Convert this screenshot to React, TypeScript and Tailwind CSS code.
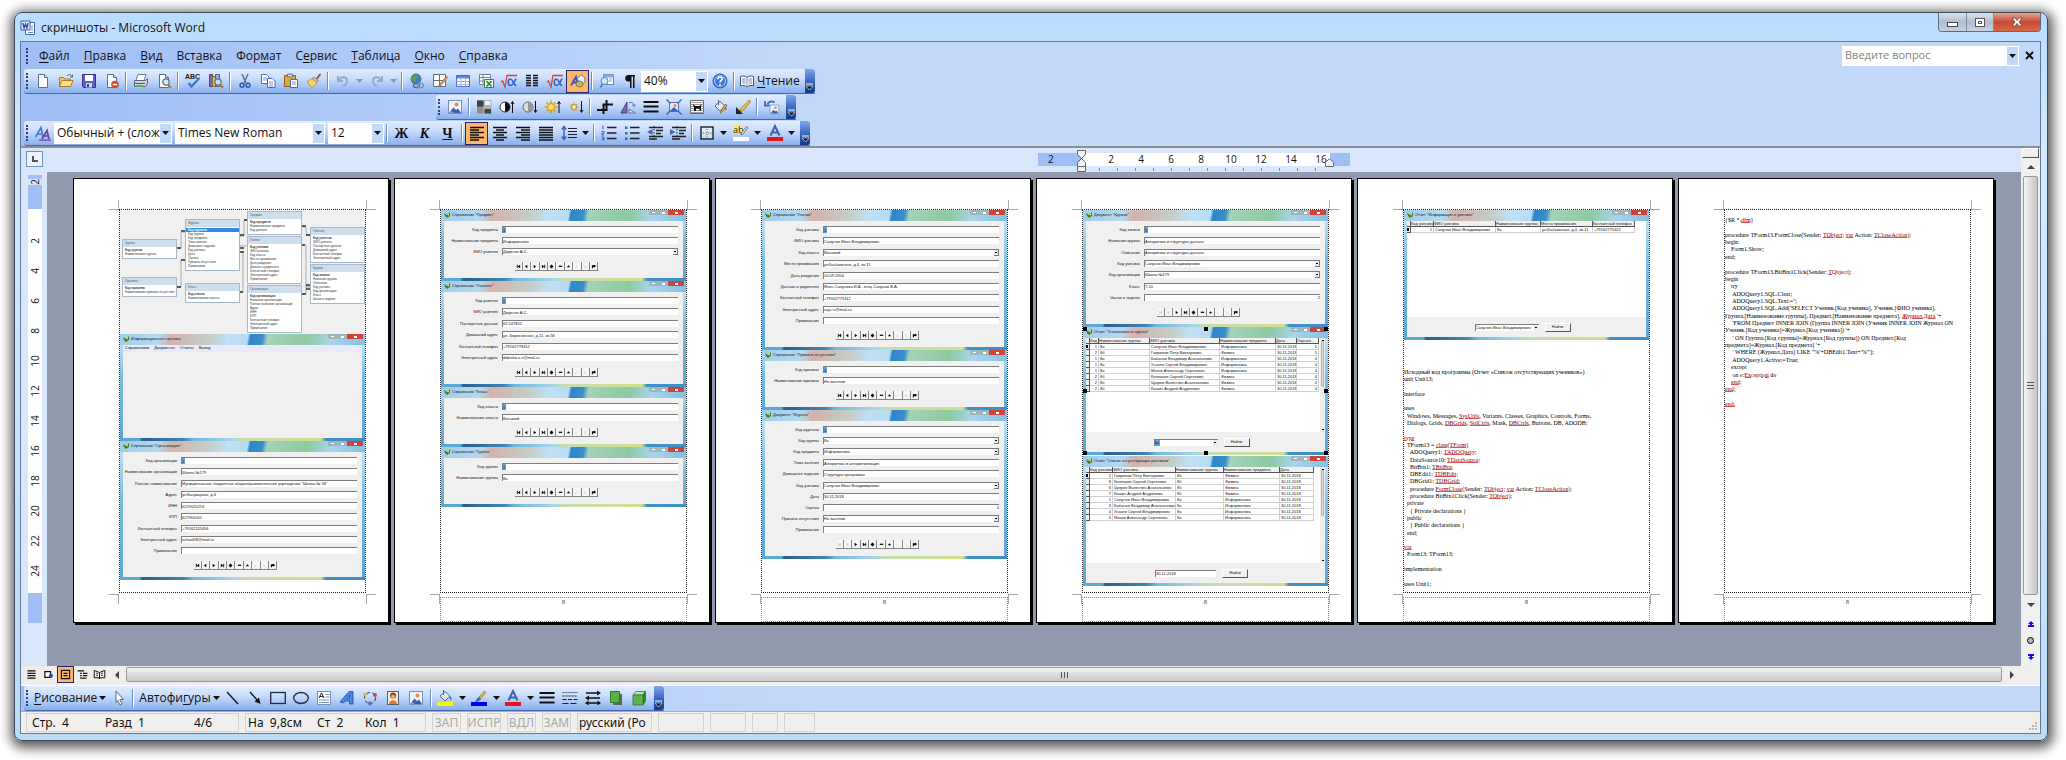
import type { ReactNode } from 'react';

/* ---------- icons ---------- */

const BLUE = '#2a56b8';
const DOC = 'M3.5 1.5h6l3 3v10h-9z';

const docBase = (
  <>
    <path d={DOC} fill="#fff" stroke="#5b6f96" />
    <path d="M9.5 1.5v3h3" fill="#dbe6f7" stroke="#5b6f96" />
  </>
);

const lens = (
  <>
    <circle cx="10" cy="9" r="3.2" fill="#cfe6f7" fillOpacity="0.9" stroke="#55708f" strokeWidth="1.2" />
    <path d="M12 11.5l3 3.2" stroke="#b5762b" strokeWidth="2" />
  </>
);

const photo = (
  <>
    <rect x="1.5" y="1.5" width="13" height="13" fill="#eef4fd" stroke="#7a8fb5" />
    <path d="M2 14l4.5-5.5L9 11l2-1.5 3 4.5z" fill="#3f5fae" />
    <path d="M2 14l2-2 3 2z" fill="#8ea5cf" />
    <circle cx="9.5" cy="5.5" r="2" fill="#e08a4f" />
  </>
);

const bucket = (
  <>
    <path d="M3 7l5-4.5L13 7l-5 5z" fill="#dfe9f7" stroke="#4f6a95" />
    <path d="M6.5 1v5" stroke="#4f6a95" />
    <path d="M12.5 6.5c2 1 2.5 3 1.5 5-1-1-2-2.5-1.5-5z" fill="#3f78c9" />
  </>
);

const brush = (
  <>
    <path d="M13.5 1l1.5 1.5-5 6-2-1.5z" fill="#e8b040" stroke="#8a6a2a" strokeWidth="0.6" />
    <path d="M8 7l2 1.5c-.5 2.5-3 3.5-6 3.5 1-1.5 1.5-4 4-5z" fill="#3a6fd0" />
  </>
);

const globe = (
  <>
    <circle cx="7" cy="6" r="5" fill="#3a83c8" stroke="#2c5f8a" strokeWidth="0.7" />
    <path d="M3 4c2-2.5 5-2.5 6-1 0 2-2 2-2 4s-2 2-3 1-2-2-1-4z" fill="#58a843" />
  </>
);

const icons: Record<string, ReactNode> = {
  word: (
    <>
      <path d="M5.5 2.5h9v12h-9z" fill="#fff" stroke="#4a6ab0" />
      <path d="M11 6h2M11 8h2M11 10h2M8 12.5h5" stroke="#6f8ccb" />
      <path d="M1 1h9v9H1z" fill="#e6effc" stroke="#3a5ca8" />
      <path d="M2.8 3l1.3 5 1.4-4 1.4 4L8.2 3" fill="none" stroke="#21489e" strokeWidth="1.3" />
    </>
  ),
  new: docBase,
  open: (
    <>
      <path d="M1.5 13.5v-9h4l1 1.5h6v7.5z" fill="#f2c85c" stroke="#a77d24" />
      <path d="M1.5 13.5l2.5-6h11l-2.5 6z" fill="#ffe08a" stroke="#a77d24" />
      <path d="M9 3c1.5-2 4-2 5 .5M14.5 1.5v2.5h-2.5" fill="none" stroke="#42628f" />
    </>
  ),
  save: (
    <>
      <path d="M1.5 1.5h13v13h-12l-1-1z" fill="#5c5fc4" stroke="#35388a" />
      <path d="M4 2h8v6H4z" fill="#fff" />
      <path d="M5 10h6v4.5H5z" fill="#d4d8ee" />
      <path d="M6 11h2v3H6z" fill="#35388a" />
    </>
  ),
  perm: (
    <>
      {docBase}
      <circle cx="11" cy="11.5" r="3.8" fill="#dd4a2a" />
      <path d="M8.8 11.5h4.4" stroke="#fff" strokeWidth="1.6" />
    </>
  ),
  print: (
    <>
      <path d="M5 1.5h8l-2 6H3z" fill="#fff" stroke="#6d7b91" />
      <path d="M1.5 7.5h11l2-2v5l-2 3h-11z" fill="#c9d1dd" stroke="#5a6679" />
      <path d="M2 10.5h10" stroke="#4f5b6e" />
      <path d="M3 12h7v2H3z" fill="#65b54d" />
    </>
  ),
  preview: (
    <>
      {docBase}
      {lens}
    </>
  ),
  spell: (
    <>
      <text x="0" y="6" fontSize="7" fontWeight="700" fontFamily="Liberation Sans, sans-serif" fill="#222">ABC</text>
      <path d="M3.5 10l3 3.5L14 5.5" fill="none" stroke="#3f74d2" strokeWidth="2.2" />
    </>
  ),
  research: (
    <>
      <path d="M1.5 1.5h3v12h-3z" fill="#7a6bc0" stroke="#4a3f88" />
      <path d="M4.5 3.5h3v10h-3z" fill="#d9b75a" stroke="#8c6f26" />
      <path d="M7.5 1.5h4v12h-4z" fill="#93abe0" stroke="#4a63a3" />
      {lens}
    </>
  ),
  cut: (
    <>
      <path d="M5 1l4 9M11 1l-4 9" stroke="#5b7299" strokeWidth="1.5" />
      <circle cx="5" cy="12.3" r="2" fill="none" stroke={BLUE} strokeWidth="1.5" />
      <circle cx="11" cy="12.3" r="2" fill="none" stroke={BLUE} strokeWidth="1.5" />
    </>
  ),
  copy: (
    <>
      <path d="M1.5 1.5h5l2.5 2.5v6.5h-7.5z" fill="#fff" stroke="#4a6db5" />
      <path d="M3 5h4M3 7h4" stroke="#7e9ad5" />
      <path d="M7.5 5.5h5l2.5 2.5v6.5h-7.5z" fill="#fff" stroke="#4a6db5" />
      <path d="M9 9h4M9 11h4M9 13h4" stroke="#7e9ad5" />
    </>
  ),
  paste: (
    <>
      <path d="M1.5 2.5h11v11h-11z" fill="#e0a843" stroke="#8a5f1c" />
      <path d="M4.5 1h5v3h-5z" fill="#c5cddb" stroke="#596780" strokeWidth="0.8" />
      <path d="M7.5 6.5h7v8h-7z" fill="#fff" stroke="#4a6db5" />
      <path d="M9 9h4M9 11h4" stroke="#7e9ad5" />
    </>
  ),
  format: (
    <>
      <path d="M14.5 1l-4 5" stroke="#8a5f2b" strokeWidth="2" />
      <path d="M8 4l4.5 3.5-1.5 2-5-4z" fill="#b8bfd0" stroke="#6e7894" strokeWidth="0.7" />
      <path d="M6 5.5l5 4c-1.5 2.5-3 4-5.5 5L1 8.5z" fill="#f5d667" stroke="#a8862d" strokeWidth="0.8" />
    </>
  ),
  undo: <path d="M3 3v5h5M3.5 7.5c3-5 9-4 8.5 1-.3 2.5-2 4-4 5" fill="none" stroke="#94a6c9" strokeWidth="1.8" />,
  redo: <path d="M13 3v5H8M12.5 7.5c-3-5-9-4-8.5 1 .3 2.5 2 4 4 5" fill="none" stroke="#94a6c9" strokeWidth="1.8" />,
  link: (
    <>
      {globe}
      <rect x="4.5" y="10.5" width="6" height="4" rx="2" fill="none" stroke="#53698f" strokeWidth="1.3" />
      <rect x="8.5" y="10.5" width="6" height="4" rx="2" fill="none" stroke="#7d92b6" strokeWidth="1.3" />
    </>
  ),
  tables: (
    <>
      <path d="M1.5 1.5h12v12h-12zM1.5 7.5h12M7.5 1.5v12" fill="#fff" stroke="#60718f" />
      <path d="M14.5 3L8 11l-1.5 2.5L9 12.5l6.5-8z" fill="#efb14b" stroke="#885b1c" strokeWidth="0.7" />
    </>
  ),
  table: (
    <>
      <path d="M1.5 2.5h13v11h-13z" fill="#fff" stroke="#4a6db5" />
      <path d="M2 3h12v2.5H2z" fill="#5f8ad8" />
      <path d="M1.5 8.5h13M1.5 11.5h13M6 5v8.5M10.5 5v8.5" stroke="#9db3dc" />
    </>
  ),
  excel: (
    <>
      <path d="M1.5 1.5h11v10h-11zM1.5 4.5h11M1.5 8h11M5 1.5v10" fill="#fff" stroke="#6a82b5" />
      <path d="M6.5 6.5h9v8h-9z" fill="#fff" stroke="#2c8a3a" />
      <path d="M8.5 8l5 5.5M13.5 8l-5 5.5" stroke="#2c8a3a" strokeWidth="1.8" />
    </>
  ),
  sqrt: (
    <>
      <path d="M0 9l1.5-1L4 14 6 2.5h10" fill="none" stroke="#d8442a" strokeWidth="1.3" />
      <path d="M15 5.5c-1.5 3.5-3 7-5.5 7-3 0-3-6.5 0-6.5 2.5 0 3 6.5 5.8 6.5" fill="none" stroke="#3468cf" strokeWidth="1.7" />
    </>
  ),
  columns: <path d="M2 2.5h5M9 2.5h5M2 5h5M9 5h5M2 7.5h5M9 7.5h5M2 10h5M9 10h5M2 12.5h5M9 12.5h5" stroke="#111" strokeWidth="1.5" />,
  drawing: (
    <>
      <path d="M1 12.5L6 4l2 8.5M3 9.5h4.5" fill="none" stroke="#3a55c0" strokeWidth="1.8" />
      <path d="M7 6l4-4.5L15 5v4l-4 3z" fill="#e9edf6" stroke="#6a7692" />
      <ellipse cx="9.5" cy="11" rx="3.5" ry="3" fill="#c9b46a" stroke="#786a35" strokeWidth="0.8" />
    </>
  ),
  docmap: (
    <>
      <path d="M4.5 1.5h10v10h-10z" fill="#fff" stroke="#5b7fc4" />
      <path d="M5 2h9v2H5zM10 6h3M10 8h3" fill="#86a7e4" stroke="#86a7e4" />
      <circle cx="5.5" cy="8" r="3.5" fill="#cde8f3" stroke="#4b87a8" />
      <path d="M3.5 11l-2 3.5" stroke="#4b87a8" strokeWidth="2" />
    </>
  ),
  pilcrow: <path d="M13 2H6.5a3.3 3.3 0 000 6.6H8V15h1.5V3.5H11V15h1.5V3.5H13z" fill="#111" />,
  help: (
    <>
      <circle cx="8" cy="8" r="7" fill="#3f79d8" stroke="#2856a8" />
      <circle cx="8" cy="8" r="5.5" fill="none" stroke="#b5d0f7" />
      <path d="M5.8 6.2c.2-3 4.4-2.8 4.4-.3 0 1.5-2.2 1.6-2.2 3.6M8 11v1.6" fill="none" stroke="#fff" strokeWidth="1.7" />
    </>
  ),
  book: (
    <>
      <path d="M1.5 3.5c2.5-1 5-.5 6.5 1 1.5-1.5 4-2 6.5-1v9.5c-2.5-1-5-.5-6.5 1-1.5-1.5-4-2-6.5-1z" fill="#fff" stroke="#44526d" />
      <path d="M8 4.5V14M3 6h3.5M3 8h3.5M3 10h3.5M9.5 6H13M9.5 8H13M9.5 10H13" stroke="#7f8ba3" />
    </>
  ),
  picture: photo,
  gray: (
    <>
      <path d="M1 1.5h6.5v13H1z" fill="#8d8d8d" />
      <path d="M1 1.5h6.5v6H1z" fill="#3f3f3f" />
      <path d="M8.5 1.5H15v13H8.5z" fill="#f0f0f0" stroke="#8795ac" strokeWidth="0.7" />
      <path d="M8.5 10H15v4.5H8.5z" fill="#444" />
      <path d="M8.5 6H15v4H8.5z" fill="#b0b0b0" />
    </>
  ),
  contrastUp: (
    <>
      <circle cx="6" cy="8" r="5" fill="#fff" stroke="#333" />
      <path d="M6 3a5 5 0 010 10z" fill="#111" />
      <path d="M13.5 14V3M12 5l1.5-2.5L15 5" fill="none" stroke="#111" />
    </>
  ),
  contrastDown: (
    <>
      <circle cx="6" cy="8" r="5" fill="#ddd" stroke="#666" />
      <path d="M6 3a5 5 0 010 10z" fill="#999" />
      <path d="M13.5 2v11M12 11l1.5 2.5L15 11" fill="none" stroke="#111" />
    </>
  ),
  brightUp: (
    <>
      <path d="M6 1.5v13M-.5 8h13M1.5 3.5l9 9M10.5 3.5l-9 9" stroke="#e39d1c" strokeWidth="1.6" />
      <circle cx="6" cy="8" r="3.5" fill="#ffe35a" stroke="#d29118" />
      <path d="M14 14V3M12.5 5L14 2.5 15.5 5" fill="none" stroke="#111" />
    </>
  ),
  brightDown: (
    <>
      <path d="M6 3.5v9M1.5 8h9M3 5l6 6M9 5l-6 6" stroke="#d8a03a" strokeWidth="1.2" />
      <circle cx="6" cy="8" r="2.5" fill="#fbe9a0" stroke="#c28c28" />
      <path d="M13.5 2v11M12 11l1.5 2.5L15 11" fill="none" stroke="#111" />
    </>
  ),
  crop: <path d="M9.5 1v10H0M6.5 15V5.5H16" fill="none" stroke="#111" strokeWidth="2" />,
  rotate: (
    <>
      <path d="M7 3v11H1z" fill="#7a65b5" stroke="#4d3f80" />
      <path d="M9 14h6.5L9 10z" fill="#dde6f4" stroke="#62779c" />
      <path d="M9 4c3-1.5 5 0 5 3M12.5 5.5L14 7.5l1.5-2" fill="none" stroke="#4072c8" />
    </>
  ),
  lines: <path d="M.5 3h15M.5 7.5h15M.5 12.5h15" stroke="#111" strokeWidth="2" />,
  compress: (
    <>
      <rect x="3.5" y="3.5" width="9" height="9" fill="#dfe9fa" stroke="#5872aa" />
      <path d="M4 12l4-4 4 4z" fill="#3f5fae" />
      <circle cx="9" cy="6.5" r="1.5" fill="#e08a4f" />
      <path d="M.5.5l4 4M15.5.5l-4 4M.5 15.5l4-4M15.5 15.5l-4-4" stroke="#3d68bd" strokeWidth="1.5" />
    </>
  ),
  wrap: (
    <>
      <path d="M1.5 1.5h13v13h-13z" fill="#fff" stroke="#666" />
      <path d="M1 3.5h14M1 5.5h14M1 7.5h14M1 9.5h14M1 11.5h14M1 13.5h14" stroke="#888" strokeWidth="0.8" />
      <path d="M3.5 5l3 2h4l2-2-.5 3v4h-1.5v-2.5H7V12H5V8z" fill="#111" />
    </>
  ),
  formatPic: (
    <>
      {bucket}
      <path d="M15 6l-4 6-3 2.5 1-3 4-6z" fill="#e9a93e" stroke="#8a5f1c" strokeWidth="0.7" />
    </>
  ),
  transparent: (
    <>
      <path d="M14.5 1L6 9.5 4.5 13 8 11.5 15.5 3z" fill="#f3c84a" stroke="#8a6a1c" strokeWidth="0.8" />
      <path d="M1 8v7h7z" fill="#222" />
    </>
  ),
  reset: (
    <>
      <g transform="translate(5 5) scale(.68)">{photo}</g>
      <path d="M10.5 3.5c-3-2-5.5-1-7 1.5M1 2v4.5h4.5" fill="none" stroke="#3d68bd" strokeWidth="1.8" />
    </>
  ),
  styles: (
    <>
      <path d="M.5 12L6 2.5 8 12M2.5 9h5" fill="none" stroke="#4a7ad0" strokeWidth="1.7" />
      <path d="M7 14l5-8.5 2 8.5M9 11h5" fill="none" stroke="#6a3fa8" strokeWidth="1.7" />
      <path d="M4 15.2h12" stroke="#6a3fa8" strokeWidth="1.2" />
    </>
  ),
  alignLeft: <path d="M1 2.5h14M1 5h9M1 7.5h14M1 10h9M1 12.5h14M1 15h9" stroke="#111" strokeWidth="1.3" />,
  alignCenter: <path d="M1 2.5h14M4 5h8M1 7.5h14M4 10h8M1 12.5h14M4 15h8" stroke="#111" strokeWidth="1.3" />,
  alignRight: <path d="M1 2.5h14M6 5h9M1 7.5h14M6 10h9M1 12.5h14M6 15h9" stroke="#111" strokeWidth="1.3" />,
  justify: <path d="M1 2.5h14M1 5h14M1 7.5h14M1 10h14M1 12.5h14M1 15h14" stroke="#111" strokeWidth="1.3" />,
  spacing: (
    <>
      <path d="M3 1.5v13M.8 4.5L3 1.5l2.2 3M.8 11.5L3 14.5l2.2-3" fill="none" stroke="#3d68bd" strokeWidth="1.5" />
      <path d="M7 3.5h9M7 6.5h9M7 9.5h9M7 12.5h9" stroke="#222" strokeWidth="1.2" />
    </>
  ),
  numbers: (
    <>
      <path d="M2 .5v4M.5 6.5h2.5v1.8H.8V10H3M.5 12H3v3H.5M1 13.5h2" fill="none" stroke="#3d68bd" />
      <path d="M6 2.5h9.5M6 8h9.5M6 13.5h9.5" stroke="#222" strokeWidth="1.3" />
    </>
  ),
  bullets: (
    <>
      <path d="M1 1.5h2.5v2.5H1zM1 7h2.5v2.5H1zM1 12.5h2.5V15H1z" fill="#3d68bd" />
      <path d="M6 2.5h9.5M6 8h9.5M6 13.5h9.5" stroke="#222" strokeWidth="1.3" />
    </>
  ),
  outdent: (
    <>
      <path d="M7 1v14" stroke="#222" strokeDasharray="1.5 1.5" />
      <path d="M2 2.5h14M9 5.5h7M9 8.5h5M2 11.5h14M2 14h8" stroke="#222" strokeWidth="1.4" />
      <path d="M5.5 4v6L0 7z" fill="#3d68bd" />
    </>
  ),
  indent: (
    <>
      <path d="M7 1v14" stroke="#222" strokeDasharray="1.5 1.5" />
      <path d="M2 2.5h14M9 5.5h7M9 8.5h5M2 11.5h14M2 14h8" stroke="#222" strokeWidth="1.4" />
      <path d="M0 4v6l5.5-3z" fill="#3d68bd" />
    </>
  ),
  border: (
    <>
      <rect x="2" y="2" width="12" height="12" fill="#fff" fillOpacity="0.4" stroke="#111" strokeWidth="1.3" />
      <path d="M8 4v9M4 8h9" stroke="#555" strokeDasharray="1 1.5" />
    </>
  ),
  highlight: (
    <>
      <path d="M0 0h9v8H0z" fill="#fdf151" />
      <text x="0" y="8" fontSize="9" fontFamily="Open Sans, sans-serif" fill="#222">ab</text>
      <path d="M15 3l-5 6-2 1 .5-2.5 5-6z" fill="#d6dbe4" stroke="#555f70" strokeWidth="0.8" />
      <path d="M0 12h16v4H0z" fill="#fff" />
    </>
  ),
  fontColor: (
    <>
      <path d="M3.5 10.5L8 1l4.5 9.5M5 7.5h6" fill="none" stroke="#3d5fae" strokeWidth="2" />
      <path d="M0 12h16v4H0z" fill="#e8131b" />
    </>
  ),
  cursor: <path d="M5 1l7.5 8.5H8.8L11 14l-2 1-2.2-4.7L5 12.5z" fill="#fff" stroke="#5a6b8c" />,
  line: <path d="M3 2l11 12" stroke="#111" strokeWidth="1.3" />,
  arrow: (
    <>
      <path d="M3 2l8 9" stroke="#111" strokeWidth="1.3" />
      <path d="M13.5 14l-6-2.5L12 7.5z" fill="#111" />
    </>
  ),
  rect: <rect x="0.7" y="2.5" width="14.6" height="11" fill="none" stroke="#222b45" strokeWidth="1.3" />,
  ellipse: <ellipse cx="8" cy="8" rx="7.3" ry="5.5" fill="none" stroke="#222b45" strokeWidth="1.3" />,
  textbox: (
    <>
      <rect x="1.5" y="1.5" width="13" height="13" fill="#fff" stroke="#7d93bd" />
      <path d="M3 8l2.5-5L8 8M4 6.5h3" fill="none" stroke="#222" />
      <path d="M9.5 4.5h4M9.5 7h4M3 10h10M3 12.5h10" stroke="#8195b8" />
    </>
  ),
  wordart: <path d="M1 12l9-10.5h4V14h-3.5v-3H6L4.5 13zM8 8.5h2.5V5z" fill="#4a86e0" stroke="#1f4ba6" strokeWidth="0.8" />,
  diagram: (
    <>
      <circle cx="8" cy="8" r="5.5" fill="none" stroke="#222" strokeDasharray="3 2.5" />
      <circle cx="3" cy="4.5" r="2" fill="#c8c25a" />
      <circle cx="13" cy="5" r="2" fill="#c0503a" />
      <circle cx="8" cy="13.5" r="2" fill="#5a6ec8" />
    </>
  ),
  clip: (
    <>
      <rect x="2.5" y="1.5" width="11" height="13" fill="#f2ead8" stroke="#555e70" />
      <circle cx="8" cy="5.5" r="3" fill="#8a4a20" />
      <circle cx="8" cy="6.5" r="1.8" fill="#f0b888" />
      <path d="M4 14c0-5 8-5 8 0z" fill="#e07a2a" />
    </>
  ),
  fill: (
    <>
      <g transform="translate(0 -1)">{bucket}</g>
      <path d="M0 12h16v4H0z" fill="#f8f800" />
    </>
  ),
  stroke: (
    <>
      {brush}
      <path d="M0 12h16v4H0z" fill="#0000f0" />
    </>
  ),
  dashes: (
    <>
      <path d="M.5 2.5h15" stroke="#222" strokeDasharray="1 1" />
      <path d="M.5 6h15" stroke="#222" strokeDasharray="2 1" />
      <path d="M.5 9.5h15" stroke="#222" strokeDasharray="4 1.5" />
      <path d="M.5 13.5h15" stroke="#222" strokeWidth="1.2" strokeDasharray="6 2" />
    </>
  ),
  arrows: (
    <>
      <path d="M1 3h12M3 8h12M2 13h12" stroke="#111" strokeWidth="1.3" />
      <path d="M16 3l-4-2.5v5zM0 8l4-2.5v5zM0 13l3.5-2.5v5zM16 13l-3.5-2.5v5z" fill="#111" />
    </>
  ),
  shadow: (
    <>
      <path d="M5 4h9v11H5z" fill="#5c6b52" />
      <path d="M2.5 1.5h9v11h-9z" fill="#58b04c" stroke="#2f7a2c" />
    </>
  ),
  cube: (
    <>
      <path d="M2 5l3-3.5h9.5L12 5z" fill="#b8e8ae" stroke="#2f7a2c" strokeWidth="0.8" />
      <path d="M12 5l2.5-3.5V11L12 15z" fill="#2f8030" stroke="#2f7a2c" strokeWidth="0.8" />
      <path d="M2 5h10v10H2z" fill="#5cb450" stroke="#2f7a2c" strokeWidth="0.8" />
    </>
  ),
  viewNormal: <path d="M3 3.5h10M3 6.5h10M3 9.5h10M3 12.5h10" stroke="#111" strokeWidth="1.5" />,
  viewWeb: (
    <>
      <path d="M3.5 4.5h7v7h-7z" fill="#fff" stroke="#111" strokeWidth="1.5" />
      <circle cx="11" cy="9.5" r="2.5" fill="#24519c" />
    </>
  ),
  viewPrint: <path d="M3 3h10v10H3zM5.5 6.5h5M5.5 9.5h5" fill="none" stroke="#111" strokeWidth="1.5" />,
  viewOutline: <path d="M2 3.5h8M5 6.5h2M8.5 6.5H14M5 9.5h2M8.5 9.5H14M5 12.5h8" stroke="#111" strokeWidth="1.5" />,
  viewRead: <path d="M1.5 3L7 5l1 1 1-1 5.5-2v9L9 12l-1 1.5L7 12l-5.500 0zM8 6v7M4 6.5h2M4 9h2M10 6.5h2M10 9h2" fill="none" stroke="#111" strokeWidth="1.2" />,
};

const Icon = ({ name, size = 'h-4 w-4' }: { name: string; size?: string }) => (
  <svg viewBox="0 0 16 16" className={`shrink-0 overflow-visible ${size}`}>{icons[name]}</svg>
);

const Caret = ({ dim }: { dim?: boolean }) => (
  <svg viewBox="0 0 7 4" className="h-[4px] w-[7px] shrink-0"><path d="M0 0h7L3.5 4z" fill={dim ? '#8396bb' : '#111'} /></svg>
);

/* ---------- tool bars ---------- */

const Grip = () => (
  <span className="flex w-[7px] shrink-0 items-center pl-[2px]"><span className="h-[16px] border-l-2 border-dotted border-[#27418c]" /></span>
);

const Separator = () => (
  <span className="flex w-[6px] shrink-0 items-center justify-center"><span className="h-[18px] w-[2px] border-l border-[#6a8ccb] bg-white" /></span>
);

const Tool = ({ name, active, children }: { name: string; active?: boolean; children?: ReactNode }) => (
  <button
    type="button"
    aria-label={name}
    className={
      active
        ? 'flex h-[23px] w-[23px] shrink-0 items-center justify-center self-center border border-[#2a2270] bg-[#fdb76a]'
        : 'flex w-[23px] shrink-0 items-center justify-center'
    }
  >
    {children ?? <Icon name={name} />}
  </button>
);

// '|' is a separator, 'v' a small drop-down arrow ('w' when disabled), a leading '*' marks a pressed button
const Tools = ({ items }: { items: string }) => (
  <>
    {items.split(' ').map((item, i) => {
      if (item === '|') return <Separator key={i} />;
      if (item === 'v' || item === 'w') {
        return <button key={i} type="button" aria-label="more" className="flex w-[11px] shrink-0 items-center justify-center"><Caret dim={item === 'w'} /></button>;
      }
      return <Tool key={i} name={item.replace('*', '')} active={item.startsWith('*')} />;
    })}
  </>
);

const ToolBar = ({ children }: { children: ReactNode }) => (
  <div className="flex h-[25px] w-fit rounded-l-[3px] border-b border-[#4468ad] bg-[linear-gradient(#e1edff,#c9ddfb_40%,#88afed)]">
    <Grip />
    {children}
    <button type="button" aria-label="Параметры панелей" className="ml-[3px] flex w-[10px] shrink-0 items-end justify-center rounded-r-[3px] bg-[linear-gradient(#7da6ea,#3c69bd_50%,#0b378f)] pb-[3px]">
      <svg viewBox="0 0 7 7" className="h-[7px] w-[7px]"><path d="M0 1h7" stroke="#fff" /><path d="M0 3h7L3.5 7z" fill="#111" stroke="#fff" strokeWidth="0.6" /></svg>
    </button>
  </div>
);

const Combo = ({ label, value, width }: { label: string; value: string; width: string }) => (
  <span className={`relative flex h-[21px] shrink-0 self-center bg-white ${width}`}>
    <select aria-label={label} className="w-full appearance-none overflow-hidden bg-transparent pr-3 pl-[3px] text-[12px] leading-[20px] text-[#111]">
      <option>{value}</option>
    </select>
    <span className="pointer-events-none absolute inset-y-px right-px flex w-[11px] items-center justify-center bg-[#c3d9f8]"><Caret /></span>
  </span>
);

const menus = [
  ['', 'Ф', 'айл'], ['', 'П', 'равка'], ['', 'В', 'ид'], ['Вст', 'а', 'вка'], ['Фор', 'м', 'ат'],
  ['С', 'е', 'рвис'], ['', 'Т', 'аблица'], ['', 'О', 'кно'], ['', 'С', 'правка'],
];

/* ---------- dialogs shown on the pages ---------- */

const Dialog = ({ title, height, children }: { title: string; height: string; children: ReactNode }) => (
  <section className={`flex shrink-0 flex-col bg-[linear-gradient(#cfe8f8,#7cbce2_40%,#5aa6d4)] px-[3px] ${height}`}>
    <header className="-mx-[3px] flex h-[11px] shrink-0 items-start bg-[linear-gradient(100deg,#9fcdeb,#b4d8ee_16%,#d3b3ac_21%,#c5cdc6_36%,#bfe0f5_44%,#b5dcf3_52%,#2f86c8_53%,#3a8ecb_58%,#a3d3b8_60%,#8cc9a0_76%,#a9d5ec_86%,#84bfe2)] pl-[3px]">
      <svg viewBox="0 0 6 6" className="mt-[2px] h-[6px] w-[6px] shrink-0"><path d="M0 1l3 2 3-3v4L3 6 1 4z" fill="#4c7a1e" /><path d="M3 2l2-1v3z" fill="#e8d33a" /></svg>
      <h2 className="mt-[2px] ml-[2px] flex-1 text-[4px] leading-[6px] whitespace-nowrap text-[#14202e]">{title}</h2>
      <span className="flex h-[5px] w-[19px] items-center justify-around rounded-bl-[1px] bg-[#9fb6bd]"><i className="h-px w-[3px] bg-white" /><i className="h-[2px] w-[3px] border border-white" /></span>
      <span className="mr-[2px] flex h-[5px] w-[16px] items-center justify-center rounded-br-[1px] bg-[#cf4436]"><i className="h-[2px] w-[3px] bg-white" /></span>
    </header>
    <div className="flex min-h-0 flex-1 flex-col bg-[#f0f0f0]">{children}</div>
    <div className="-mx-[3px] h-[3px] shrink-0 bg-[linear-gradient(90deg,#5ba9d6_8%,#2a5f8e_9%,#3f86b8_26%,#6fb9e0_30%,#a8d4ea_46%,#c5dcb0_50%,#cfe08f_82%,#3f8fc8_84%)]" />
  </section>
);

const navMarks: [string, string][] = [
  ['first', 'M1 1h1v4H1zM5 1v4L2 3z'],
  ['prior', 'M4 1v4L1 3z'],
  ['next', 'M2 1v4l3-2z'],
  ['last', 'M4 1h1v4H4zM1 1v4l3-2z'],
  ['insert', 'M2 1h2v1h1v2H4v1H2V4H1V2h1z'],
  ['delete', 'M1 2h4v1.5H1z'],
  ['edit', 'M1 4l2-2.5L5 4z'],
  ['post', 'M1 3l1 2 3-4-3 2.5z'],
  ['cancel', 'M1 1l4 4-1 .5L1 2zM5 1L1 5v-.5z'],
  ['refresh', 'M1 5V1.5h3V.5L6 2.5l-2 2v-1H2.5V5z'],
];

const Navigator = ({ atStart }: { atStart?: boolean }) => (
  <div className="mx-auto my-[7px] grid w-[98px] shrink-0 grid-cols-10 pr-[14px]">
    {navMarks.map(([name, d], i) => (
      <button key={name} type="button" aria-label={name} className="flex h-[9px] items-center justify-center border-r border-b border-[#858585] bg-[#f6f6f6]">
        <svg viewBox="0 0 6 6" className="h-[5px] w-[5px]"><path d={d} fill={i === 7 || i === 8 || (atStart && i < 2) ? '#d0d0d0' : '#000'} /></svg>
      </button>
    ))}
  </div>
);

// [label, value, kind]: 'key' is the selected id, 'list' a drop-down, 'num' aligned right
type Field = [string, string, ('key' | 'list' | 'num')?];

const FormDialog = ({ title, height, fields, atStart }: { title: string; height: string; fields: Field[]; atStart?: boolean }) => (
  <Dialog title={title} height={height}>
    <div className="flex flex-1 flex-col justify-between pt-[5px] pr-[5px]">
      {fields.map(([label, value, kind]) => (
        <label key={label} className="flex h-[7px] items-center gap-[4px]">
          <span className="w-[54px] shrink-0 text-right text-[4px] leading-[5px] whitespace-nowrap text-[#111]">{label}</span>
          {kind === 'list' ? (
            <span className="relative flex h-[7px] flex-1 border-t border-l border-[#7d7d7d] bg-white">
              <select className="w-full appearance-none text-[4px] leading-[6px] text-[#111]"><option>{value}</option></select>
              <span className="absolute top-0 right-0 flex h-[6px] w-[5px] items-center justify-center border-r border-b border-[#777] bg-[#ececec]"><i className="h-px w-[2px] bg-black" /></span>
            </span>
          ) : (
            <input
              readOnly
              value={value}
              className={`h-[7px] min-w-0 flex-1 border-t border-l border-[#7d7d7d] text-[4px] leading-[6px] text-[#111] ${kind === 'key' ? 'bg-[linear-gradient(90deg,#5c9fe4_3px,#fff_3px)]' : 'bg-white'} ${kind === 'num' ? 'text-right' : ''}`}
            />
          )}
        </label>
      ))}
    </div>
    <Navigator atStart={atStart} />
  </Dialog>
);

interface ReportProps {
  title: string;
  height: string;
  widths: number[];
  head: string[];
  rows: string[][];
  scroll?: boolean;
  children: ReactNode;
}

const Report = ({ title, height, widths, head, rows, scroll, children }: ReportProps) => (
  <Dialog title={title} height={height}>
    <div className="flex min-h-0 flex-1 bg-white">
      <div className="flex-1">
        <table className="table-fixed border-separate border-spacing-0 text-[4px] leading-[5px] text-[#111]" style={{ width: widths.reduce((a, b) => a + b, 4) }}>
          <colgroup>
            <col style={{ width: 4 }} />
            {widths.map((w, i) => <col key={i} style={{ width: w }} />)}
          </colgroup>
          <thead>
            <tr className="bg-[#f0f0f0]">
              <th className="border-r border-b border-[#555] p-0" />
              {head.map((h) => <th key={h} className="overflow-hidden border-r border-b border-[#555] p-0 text-left font-normal whitespace-nowrap">{h}</th>)}
            </tr>
          </thead>
          <tbody>
            {rows.map((row, r) => (
              <tr key={r}>
                <td className="h-[6px] border-r border-b border-[#555] bg-[#f0f0f0] p-0">{r === 0 && <i className="block h-[3px] w-[2px] bg-black" />}</td>
                {row.map((cell, c) => (
                  <td key={c} className={`overflow-hidden border-r border-b border-[#d0d0d0] p-0 whitespace-nowrap ${c === 0 || (row.length === 6 && c === 5) ? 'pr-px text-right' : 'pl-px'}`}>{cell}</td>
                ))}
              </tr>
            ))}
          </tbody>
        </table>
      </div>
      {scroll && (
        <div className="flex w-[5px] shrink-0 flex-col justify-between bg-[#eee] py-[2px]">
          <i className="mx-auto h-px w-[2px] bg-black" />
          <i className="mx-px mb-auto h-[46px] rounded-[1px] border border-[#b5b5b5] bg-[#dadada]" />
          <i className="mx-auto h-px w-[2px] bg-black" />
        </div>
      )}
    </div>
    <div className="flex h-[20px] shrink-0 items-center justify-center gap-[6px] pr-[8px]">{children}</div>
  </Dialog>
);

const FindButton = () => (
  <button type="button" className="h-[9px] w-[26px] border border-t-white border-r-[#555] border-b-[#555] border-l-white bg-[#f0f0f0] text-[4px] leading-[6px] text-[#111]">Найти</button>
);

const SmallList = ({ label, value, chosen }: { label: string; value: string; chosen?: boolean }) => (
  <span className="relative flex h-[7px] w-[64px] border-t border-l border-[#7d7d7d] bg-white">
    <select aria-label={label} className={`w-full appearance-none text-[4px] leading-[6px] text-[#111] ${chosen ? 'bg-[linear-gradient(90deg,#5c9fe4_5px,#fff_5px)]' : ''}`}><option>{value}</option></select>
    <span className="absolute top-0 right-0 flex h-[6px] w-[5px] items-center justify-center bg-[#ececec]"><i className="h-px w-[2px] bg-black" /></span>
  </span>
);

/* ---------- data schema ---------- */

const entities: { name: string; place: string; fields: string[]; picked?: boolean }[] = [
  { name: 'Группы', place: 'left-[2px] top-[29px] h-[20px]', fields: ['Код группы', 'Наименование группы'] },
  { name: 'Причины', place: 'left-[2px] top-[67px] h-[20px]', fields: ['Код причины', 'Наименование причины отсутствия'] },
  { name: 'Журнал', place: 'left-[65px] top-[9px] h-[52px]', picked: true, fields: ['Код журнала', 'Код группы', 'Код предмета', 'Тема занятия', 'Домашнее задание', 'Код ученика', 'Дата', 'Оценка', 'Причина отсутствия', 'Примечание'] },
  { name: 'Класс', place: 'left-[65px] top-[73px] h-[20px]', fields: ['Код класса', 'Наименование класса'] },
  { name: 'Предмет', place: 'left-[127px] top-[1px] h-[24px]', fields: ['Код предмета', 'Наименование предмета', 'Код учителя'] },
  { name: 'Ученик', place: 'left-[127px] top-[26px] h-[48px]', fields: ['Код ученика', 'ФИО ученика', 'Код класса', 'Место проживания', 'Дата рождения', 'Данные о родителях', 'Контактный телефон', 'Электронный адрес', 'Примечание'] },
  { name: 'Организация', place: 'left-[127px] top-[75px] h-[48px]', fields: ['Код организации', 'Название организации', 'Полное название организации', 'Адрес', 'ИНН', 'КПП', 'Контактный телефон', 'Электронный адрес', 'Примечание'] },
  { name: 'Учителя', place: 'left-[190px] top-[17px] h-[36px]', fields: ['Код учителя', 'ФИО учителя', 'Паспортные данные', 'Домашний адрес', 'Контактный телефон', 'Электронный адрес'] },
  { name: 'Кружок', place: 'left-[190px] top-[54px] h-[40px]', fields: ['Код записи', 'Название кружка', 'Описание', 'Код ученика', 'Код организации', 'Класс', 'Часов в неделю'] },
];

const Schema = () => (
  <div className="relative h-[124px] shrink-0 bg-[#f0f0f0]">
    <svg viewBox="0 0 245 124" className="absolute top-0 left-0 h-[124px] w-[245px]" fill="none" stroke="#999" strokeWidth="0.8">
      <path d="M57 38h4V22h4M57 77h4V50h4M120 26h4V10h3M120 36h4V36h3M120 42h3v40h-3M182 17h4v8h4M182 35h4v42h4M182 84h4v-8h4" />
      <path d="M57 38h4M57 77h4M61 21h4M61 50h4M120 25h4M120 38h4M120 42h4M124 10h3M120 82h3M182 16h4M182 35h3M186 25h4M182 84h4M186 75h4M186 79h4" stroke="#333" strokeWidth="1.4" />
    </svg>
    {entities.map((e) => (
      <div key={e.name} className={`absolute w-[55px] overflow-hidden border border-[#a9b8c8] bg-white text-[3px] leading-[4px] text-[#333] ${e.place}`}>
        <h3 className="h-[7px] bg-[#cfdeec] pl-[2px] leading-[7px] text-[#4a5a6a]">{e.name}</h3>
        <ul className="pt-px">
          {e.fields.map((f, i) => (
            <li key={f} className={`pl-[2px] whitespace-nowrap ${i === 0 ? 'font-bold' : ''} ${i === 0 && e.picked ? 'bg-[#2f8ae0] text-white' : ''}`}>{f}</li>
          ))}
        </ul>
      </div>
    ))}
  </div>
);

/* ---------- source listings, misspelled words between tildes ---------- */

const unitHead = [
  'Исходный код программы (Отчет «Список отсутствующих учеников»)', 'unit Unit13;', '', 'interface', '', 'uses',
  '  Windows, Messages, ~SysUtils~, Variants, Classes, Graphics, Controls, Forms,',
  '  Dialogs, Grids, ~DBGrids~, ~StdCtrls~, Mask, ~DBCtrls~, Buttons, DB, ADODB;', '',
  '~type~', '  TForm13 = ~class(TForm)~', '    ADOQuery1: ~TADOQuery;~', '    DataSource10: ~TDataSource;~', '    BitBtn1: ~TBitBtn;~',
  '    DBEdit1: ~TDBEdit;~', '    DBGrid1: ~TDBGrid;~', '    procedure ~FormClose(~Sender: ~TObject;~ ~var~ Action: ~TCloseAction);~',
  '    procedure BitBtn1Click(Sender: ~TObject);~', '  private', '    { Private declarations }', '  public', '    { Public declarations }', '  end;', '',
  '~var~', '  Form13: TForm13;', '', 'implementation', '', 'uses Unit1;',
];

const unitBody = [
  '{$R *.~dfm~}', '', 'procedure TForm13.FormClose(Sender: ~TObject;~ ~var~ Action: ~TCloseAction);~', 'begin', '    Form1.Show;', 'end;', '',
  'procedure TForm13.BitBtn1Click(Sender: ~TObject);~', 'begin', '    try', '     ADOQuery1.SQL.Clear;', "     ADOQuery1.SQL.Text:='';",
  "     ADOQuery1.SQL.Add('SELECT Ученик.[Код ученика], Ученик.[ФИО ученика],",
  "Группа.[Наименование группы], Предмет.[Наименование предмета], ~Журнал.Дата~ '+",
  "     'FROM Предмет INNER JOIN (Группа INNER JOIN (Ученик INNER JOIN Журнал ON",
  "Ученик.[Код ученика]=Журнал.[Код ученика]) '+",
  "     ' ON Группа.[Код группы]=Журнал.[Код группы]) ON Предмет.[Код",
  "предмета]=Журнал.[Код предмета] '+",
  `     ' WHERE (Журнал.Дата) LIKE "%'+DBEdit1.Text+'%"');`,
  '     ADOQuery1.Active:=True;', '    except', '     on ~e:Exception~ do', '    ~end;~', '~end;~', '', '~end.~',
];

const Listing = ({ lines, className }: { lines: string[]; className: string }) => (
  <div className={`flex shrink-0 flex-col justify-between font-['Liberation_Serif',serif] text-[6px] leading-[7px] whitespace-pre text-black ${className}`}>
    {lines.map((line, i) => (
      <p key={i} className="h-[7px]">
        {line.split('~').map((part, j) => (j % 2 ? <span key={j} className="text-[#8c0000] underline decoration-[#e05050] decoration-1 underline-offset-0">{part}</span> : part))}
      </p>
    ))}
  </div>
);

/* ---------- pages ---------- */

const Corner = ({ className }: { className: string }) => <i className={`absolute h-[10px] w-[10px] border-[#a8a8a8] ${className}`} />;

const Page = ({ footer = true, children }: { footer?: boolean; children: ReactNode }) => (
  <article className="relative flex h-[445px] w-[316px] shrink-0 flex-col border border-black bg-white pt-[30px] pr-[22px] pl-[45px] shadow-[2px_2px_0_#000]">
    <Corner className="top-[21px] left-[35px] border-r border-b" />
    <Corner className="top-[21px] right-[12px] border-b border-l" />
    <Corner className="top-[415px] left-[35px] border-t border-r" />
    <Corner className="top-[415px] right-[12px] border-t border-l" />
    <div className="flex h-[384px] flex-col border border-dotted border-[#222]">{children}</div>
    {footer && (
      <footer className="z-10 mt-[4px] h-[25px] border border-dotted border-[#888] bg-white text-center text-[6px] leading-[8px] text-[#555]">8</footer>
    )}
  </article>
);

const FIO = 'Сапунов Иван Владимирович';
const DAY = '30.11.2018';

const progress = [
  ['1', '8а', FIO, 'Информатика', DAY, '5'],
  ['2', '8б', 'Гаврилов Петр Викторович', 'Физика', DAY, '5'],
  ['1', '8а', 'Бабанов Владимир Анатольевич', 'Информатика', DAY, '4'],
  ['1', '8а', 'Усачев Сергей Владимирович', 'Информатика', DAY, '4'],
  ['1', '8а', 'Мотов Александр Сергеевич', 'Информатика', DAY, '4'],
  ['2', '8б', 'Колпаков Сергей Сергеевич', 'Физика', DAY, '4'],
  ['2', '8б', 'Чупров Валентин Анатольевич', 'Физика', DAY, '4'],
  ['2', '8б', 'Кашин Андрей Андреевич', 'Физика', DAY, '4'],
];

const absent = [
  ['2', 'Гаврилов Петр Викторович', '8б', 'Физика', DAY],
  ['8', 'Колпаков Сергей Сергеевич', '8б', 'Физика', DAY],
  ['6', 'Чупров Валентин Анатольевич', '8б', 'Физика', DAY],
  ['7', 'Кашин Андрей Андреевич', '8б', 'Физика', DAY],
  ['1', FIO, '8а', 'Информатика', DAY],
  ['3', 'Бабанов Владимир Анатольевич', '8а', 'Информатика', DAY],
  ['4', 'Усачев Сергей Владимирович', '8а', 'Информатика', DAY],
  ['5', 'Мотов Александр Сергеевич', '8а', 'Информатика', DAY],
];

const handles = ['top-0 left-0', 'top-0 right-0', 'top-[62px] left-0', 'top-[62px] right-0', 'bottom-0 left-0', 'bottom-0 right-0', 'bottom-0 left-[121px]', 'top-0 left-[121px]'];

const Pages = () => (
  <div className="flex gap-[5px]">
    <Page footer={false}>
      <Schema />
      <Dialog title="Информационная система" height="h-[107px]">
        <nav className="flex h-[7px] gap-[5px] bg-[#e9ecf8] pl-[2px] text-[4px] leading-[6px] text-[#111]">
          <span>Справочники</span><span>Документы</span><span>Отчеты</span><span>Выход</span>
        </nav>
      </Dialog>
      <FormDialog
        title={'Справочник "Организация"'}
        height="h-[139px]"
        fields={[
          ['Код организации', '1', 'key'], ['Наименование организации', 'Школа №179'],
          ['Полное наименование', 'Муниципальное бюджетное общеобразовательное учреждение "Школа № 58"'],
          ['Адрес', 'ул.Багрицкого, д.4'], ['ИНН', '6229025253'], ['КПП', '622901001'],
          ['Контактный телефон', '+79162115456'], ['Электронный адрес', 'school58@mail.ru'], ['Примечание', ''],
        ]}
      />
    </Page>
    <Page>
      <FormDialog title={'Справочник "Предмет"'} height="h-[71px]" fields={[['Код предмета', '1', 'key'], ['Наименование предмета', 'Информатика'], ['ФИО учителя', 'Диденко А.С.', 'list']]} />
      <FormDialog
        title={'Справочник "Учитель"'}
        height="h-[106px]"
        fields={[['Код учителя', '1', 'key'], ['ФИО учителя', 'Диденко А.С.'], ['Паспортные данные', '65 547852'], ['Домашний адрес', 'ул. Борисовская, д.11, кв.56'], ['Контактный телефон', '+79162778412'], ['Электронный адрес', 'didenko.a.s@mail.ru']]}
      />
      <FormDialog title={'Справочник "Класс"'} height="h-[60px]" fields={[['Код класса', '1', 'key'], ['Наименование класса', 'Восьмой']]} />
      <FormDialog title={'Справочник "Группа"'} height="h-[60px]" fields={[['Код группы', '1', 'key'], ['Наименование группы', '8а']]} />
    </Page>
    <Page>
      <FormDialog
        title={'Справочник "Ученик"'}
        height="h-[140px]"
        fields={[
          ['Код ученика', '1', 'key'], ['ФИО ученика', FIO], ['Код класса', 'Восьмой', 'list'], ['Место проживания', 'ул.Бабаевская, д.4, кв.11'],
          ['Дата рождения', '10.09.2004'], ['Данные о родителях', 'Мать Сапунова И.А., отец Сапунов В.А.'],
          ['Контактный телефон', '+79162775412'], ['Электронный адрес', 'sap.i.v@mail.ru'], ['Примечание', ''],
        ]}
      />
      <FormDialog title={'Справочник "Причина отсутствия"'} height="h-[60px]" fields={[['Код причины', '1', 'key'], ['Наименование причины', 'На занятии']]} />
      <FormDialog
        atStart
        title={'Документ "Журнал"'}
        height="h-[149px]"
        fields={[
          ['Код журнала', '1', 'key'], ['Код группы', '8а', 'list'], ['Код предмета', 'Информатика', 'list'], ['Тема занятия', 'Алгоритмы и алгоритмизация'],
          ['Домашнее задание', 'Структура программы'], ['Код ученика', FIO, 'list'], ['Дата', DAY], ['Оценка', '5', 'num'],
          ['Причина отсутствия', 'На занятии', 'list'], ['Примечание', ''],
        ]}
      />
    </Page>
    <Page>
      <FormDialog
        atStart
        title={'Документ "Кружок"'}
        height="h-[117px]"
        fields={[
          ['Код записи', '1', 'key'], ['Название кружка', 'Алгоритмы и структуры данных'], ['Описание', 'Алгоритмы и структуры данных'],
          ['Код ученика', FIO, 'list'], ['Код организации', 'Школа №179', 'list'], ['Класс', '7-10'], ['Часов в неделю', '2', 'num'],
        ]}
      />
      <div className="relative mb-px">
        <Report
          scroll
          title={'Отчет "Успеваемость группы"'}
          height="h-[128px]"
          widths={[9, 51, 70, 56, 21, 22]}
          head={['Код', 'Наименование группы', 'ФИО ученика', 'Наименование предмета', 'Дата', 'Оценка']}
          rows={progress}
        >
          <SmallList label="Группа" value="8а" chosen />
          <FindButton />
        </Report>
        {handles.map((place) => <i key={place} className={`absolute h-[4px] w-[4px] bg-black ${place}`} />)}
      </div>
      <Report
        scroll
        title={'Отчет "Список отсутствующих учеников"'}
        height="h-[130px]"
        widths={[23, 63, 48, 56, 34]}
        head={['Код ученика', 'ФИО ученика', 'Наименование группы', 'Наименование предмета', 'Дата']}
        rows={absent}
      >
        <input readOnly aria-label="Дата" value={DAY} className="h-[7px] w-[61px] border-t border-l border-[#7d7d7d] bg-white text-[4px] leading-[6px] text-[#111]" />
        <FindButton />
      </Report>
    </Page>
    <Page>
      <Report
        title={'Отчет "Информация о ученике"'}
        height="h-[130px]"
        widths={[23, 62, 45, 52, 42]}
        head={['Код ученика', 'ФИО ученика', 'Наименование группы', 'Место проживания', 'Контактный телефон']}
        rows={[['1', FIO, '8а', 'ул.Бабаевская, д.4, кв.11', '+79162775412']]}
      >
        <SmallList label="Ученик" value={FIO} />
        <FindButton />
      </Report>
      <Listing lines={unitHead} className="mt-[29px] h-[219px]" />
    </Page>
    <Page>
      <Listing lines={unitBody} className="mt-[7px] h-[191px]" />
    </Page>
  </div>
);

/* ---------- window ---------- */

const ArrowMark = ({ d, fill = '#444' }: { d: string; fill?: string }) => (
  <svg viewBox="0 0 8 8" className="h-2 w-2"><path d={d} fill={fill} /></svg>
);

const StatusBox = ({ className, children }: { className: string; children?: ReactNode }) => (
  <span className={`flex h-[19px] shrink-0 items-center border border-[#d3d2cd] whitespace-nowrap ${className}`}>{children}</span>
);

const VerticalRuler = () => (
  <div className="w-[26px] shrink-0 bg-[#d8e7fc] pt-[3px] pl-[7px] text-[10px] leading-[14px] text-[#111]">
    <div className="flex h-[34px] w-[14px] justify-center bg-[#9ebef5]"><span className="h-[14px] -rotate-90 bg-[#d8e7fc]">2</span></div>
    <div className="flex h-[384px] w-[14px] flex-col bg-white pt-[17px]">
      {Array.from({ length: 12 }, (_, i) => (
        <span key={i} className="flex h-[30px] items-center justify-center"><span className="-rotate-90">{i * 2 + 2}</span></span>
      ))}
    </div>
    <div className="h-[30px] w-[14px] bg-[#9ebef5]" />
  </div>
);

const HorizontalRuler = () => (
  <div className="flex h-[24px] shrink-0 bg-[#d8e7fc] pt-[3px] pl-[5px]">
    <button type="button" aria-label="Табуляция" className="flex h-[16px] w-[17px] items-center justify-center border border-[#6f8fd0] bg-[#edf4fe]">
      <i className="h-[6px] w-[6px] border-b-2 border-l-2 border-[#555]" />
    </button>
    <div className="relative mt-[2px] ml-[995px] flex h-[13px] text-[10px] leading-[13px] text-[#111]">
      <span className="w-[43px] bg-[#9ebef5] pl-[10px]">2</span>
      <span className="flex w-[249px] bg-white pl-[15px]">
        {[2, 4, 6, 8, 10, 12, 14, 16].map((n) => (
          <span key={n} className="w-[30px] shrink-0 text-center">{n}</span>
        ))}
      </span>
      <span className="w-[20px] bg-[#9ebef5]" />
      <i className="absolute top-[15px] left-[61px] h-[3px] w-[226px] bg-[repeating-linear-gradient(90deg,#7286a8_0_1px,transparent_1px_18px)]" />
      <svg viewBox="0 0 9 22" className="absolute -top-[3px] left-[39px] h-[22px] w-[9px]">
        <path d="M.5.5h8v4l-4 4-4-4zM.5 16.5v-4l4-4 4 4v4zM.5 16.5h8v5h-8z" fill="#f4f4f4" stroke="#666" />
      </svg>
      <svg viewBox="0 0 9 9" className="absolute top-[5px] left-[287px] h-[9px] w-[9px]"><path d="M.5 8.5v-4l4-4 4 4v4z" fill="#f4f4f4" stroke="#666" /></svg>
    </div>
  </div>
);

const App = () => (
  <div className="flex min-h-screen flex-col bg-white pt-[12px] pr-[18px] pb-[19px] pl-[14px] font-['Open_Sans','Noto_Sans',sans-serif] text-[12px] text-[#111]">
    <div className="flex flex-1 flex-col overflow-hidden rounded-[8px] border border-[#3c4a5c] bg-[linear-gradient(#b8dcff,#d4ebfd_20%,#bcdcf6)] pr-[6px] pb-[6px] pl-[5px] shadow-[1px_3px_12px_4px_rgba(0,0,0,0.65)]">
      <header className="flex h-[28px] shrink-0 items-start">
        <h1 className="flex h-[28px] flex-1 items-center gap-[5px] pt-[2px]"><Icon name="word" /> скриншоты - Microsoft Word</h1>
        <div className="flex h-[19px] overflow-hidden rounded-b-[4px] border border-t-0 border-[#5a6b80]">
          <button type="button" aria-label="Свернуть" className="flex w-[28px] items-center justify-center border-r border-[#7c8b9e] bg-[linear-gradient(#dbe4ee,#aebccd_50%,#c5d2e0)] pt-[5px]"><i className="h-[5px] w-[11px] border border-[#444] bg-white" /></button>
          <button type="button" aria-label="Свернуть в окно" className="flex w-[27px] items-center justify-center border-r border-[#7c8b9e] bg-[linear-gradient(#dbe4ee,#aebccd_50%,#c5d2e0)]"><i className="flex h-[9px] w-[10px] items-center justify-center border border-[#555] bg-white"><i className="h-[3px] w-[4px] border border-[#555]" /></i></button>
          <button type="button" aria-label="Закрыть" className="flex w-[46px] items-center justify-center bg-[linear-gradient(#e6a595,#c64a33_50%,#d6674a)]">
            <svg viewBox="0 0 12 10" className="h-[10px] w-[12px]"><path d="M1 1h3l2 2.5L8 1h3L8 5l3 4H8L6 6.5 4 9H1l3-4z" fill="#fff" stroke="#5c3a3a" strokeWidth="0.7" /></svg>
          </button>
        </div>
      </header>

      <div className="flex min-h-0 flex-1 flex-col border border-[#62799c] bg-[#efeeec]">
        <div className="shrink-0 bg-[linear-gradient(90deg,#9ebef5,#c3d9f9_40%)] pl-[3px]">
          <nav className="flex h-[27px] items-center pr-px">
            <Grip />
            <div className="flex pl-px">
              {menus.map(([pre, key, post]) => (
                <button key={pre + key + post} type="button" className="px-[7px]">{pre}<u className="underline-offset-2">{key}</u>{post}</button>
              ))}
            </div>
            <span className="relative ml-auto flex h-[20px] w-[177px] bg-white">
              <input aria-label="Вопрос" placeholder="Введите вопрос" className="w-full bg-transparent px-[3px] text-[11px] placeholder:text-[#858585]" />
              <span className="absolute inset-y-px right-px flex w-[11px] items-center justify-center bg-[#c3d9f8]"><Caret /></span>
            </span>
            <button type="button" aria-label="Закрыть документ" className="flex w-[20px] justify-center"><svg viewBox="0 0 9 9" className="h-[9px] w-[9px]"><path d="M1 1l7 7M8 1L1 8" stroke="#111" strokeWidth="2" /></svg></button>
          </nav>
          <ToolBar>
            <Tools items="new open save perm | print preview | spell research | cut copy paste format | undo w redo w | link tables table excel sqrt columns sqrt *drawing | docmap pilcrow" />
            <Combo label="Масштаб" value="40%" width="w-[67px]" />
            <Tools items="help |" />
            <button type="button" className="flex shrink-0 items-center gap-[2px] px-[2px]"><Icon name="book" /><span><u className="underline-offset-2">Ч</u>тение</span></button>
          </ToolBar>
          <div className="mt-px pl-[412px]">
            <ToolBar><Tools items="picture | gray contrastUp contrastDown brightUp brightDown | crop rotate lines compress wrap formatPic transparent | reset" /></ToolBar>
          </div>
          <div className="mt-px">
            <ToolBar>
              <Tools items="styles" />
              <Combo label="Стиль" value="Обычный + (слож" width="w-[118px]" />
              <span className="w-[3px]" />
              <Combo label="Шрифт" value="Times New Roman" width="w-[150px]" />
              <span className="w-[3px]" />
              <Combo label="Размер" value="12" width="w-[56px]" />
              <Separator />
              <Tool name="Полужирный"><b className="font-['Liberation_Serif',serif] text-[14px]">Ж</b></Tool>
              <Tool name="Курсив"><b className="font-['Liberation_Serif',serif] text-[14px] italic">К</b></Tool>
              <Tool name="Подчеркнутый"><b className="font-['Liberation_Serif',serif] text-[14px] underline">Ч</b></Tool>
              <Tools items="| *alignLeft alignCenter alignRight justify spacing v | numbers bullets outdent indent | border v highlight v fontColor v" />
            </ToolBar>
          </div>
        </div>

        <div className="flex min-h-0 flex-1 border-t-2 border-[#8c8f94]">
          <div className="flex min-w-0 flex-1 flex-col overflow-hidden">
            <HorizontalRuler />
            <div className="flex flex-1">
              <VerticalRuler />
              <main className="min-w-0 flex-1 overflow-hidden bg-[#9099ae] pt-[6px] pl-[26px] font-['Liberation_Sans',sans-serif]">
                <Pages />
              </main>
            </div>
          </div>
          <div className="flex w-[19px] shrink-0 flex-col items-center bg-[#f0f0f0]">
            <i className="h-[10px] w-[17px] border border-white border-r-[#555] border-b-[#555] bg-[#efefef]" />
            <button type="button" aria-label="Вверх" className="flex h-[18px] items-center"><ArrowMark d="M0 6h8L4 2z" /></button>
            <div className="flex w-[15px] flex-1 flex-col items-center justify-center gap-[2px] rounded-[2px] border border-[#9a9a9a] bg-[linear-gradient(90deg,#f5f5f5,#dcdcdc_50%,#c6c6c8)]">
              {[0, 1, 2].map((i) => <i key={i} className="h-px w-[7px] bg-[#555]" />)}
            </div>
            <button type="button" aria-label="Вниз" className="flex h-[20px] items-center"><ArrowMark d="M0 2h8L4 6z" /></button>
            <button type="button" aria-label="Предыдущая страница" className="flex h-[17px] items-center"><ArrowMark d="M1 4l3-3 3 3H5v1h2v2H1V5h2V4z" fill="#1010e0" /></button>
            <button type="button" aria-label="Объект перехода" className="flex h-[16px] items-center"><i className="h-[7px] w-[7px] rounded-full border border-black bg-[#bbb]" /></button>
            <button type="button" aria-label="Следующая страница" className="flex h-[18px] items-center"><ArrowMark d="M1 1h6v2H5v1h2L4 7 1 4h2V3H1z" fill="#1010e0" /></button>
          </div>
        </div>

        <div className="flex h-[19px] shrink-0 items-center bg-[#efeeec] pr-[19px] pb-[2px] pl-[2px]">
          {['viewNormal', 'viewWeb', 'viewPrint', 'viewOutline', 'viewRead'].map((view) => (
            <button
              key={view}
              type="button"
              aria-label={view}
              className={view === 'viewPrint' ? 'flex h-[17px] w-[17px] items-center justify-center border border-[#2a2270] bg-[#fdb76a]' : 'flex h-[17px] w-[17px] items-center justify-center'}
            >
              <Icon name={view} size="h-[13px] w-[13px]" />
            </button>
          ))}
          <button type="button" aria-label="Влево" className="flex w-[18px] justify-center"><ArrowMark d="M6 0v8L2 4z" /></button>
          <div className="flex h-[15px] flex-1 items-center justify-center gap-[2px] rounded-[2px] border border-[#9a9a9a] bg-[linear-gradient(#f5f5f5,#dcdcdc_50%,#c9c9cb)]">
            {[0, 1, 2].map((i) => <i key={i} className="h-[6px] w-px bg-[#555]" />)}
          </div>
          <button type="button" aria-label="Вправо" className="flex w-[19px] justify-center"><ArrowMark d="M2 0v8l4-4z" /></button>
        </div>

        <div className="shrink-0 border-t border-white bg-[linear-gradient(90deg,#9ebef5,#c3d9f9_40%)] pl-[3px]">
          <ToolBar>
            <button type="button" className="flex shrink-0 items-center gap-[2px] pr-px pl-[3px]"><span><u className="underline-offset-2">Р</u>исование</span><Caret /></button>
            <Tools items="cursor |" />
            <button type="button" className="flex shrink-0 items-center gap-[2px] pr-px pl-[3px]"><span>Автофи<u className="underline-offset-2">г</u>уры</span><Caret /></button>
            <Tools items="line arrow rect ellipse textbox wordart diagram clip picture | fill v stroke v fontColor v lines dashes arrows shadow cube" />
          </ToolBar>
        </div>

        <footer className="flex h-[22px] shrink-0 items-center gap-[6px] border-t border-[#a9a9a6] bg-[#f0efed] pl-[5px] font-['Noto_Sans',sans-serif] text-[12px]">
          <StatusBox className="w-[213px] pl-[5px]"><span className="w-[73px]">Стр.&nbsp; 4</span><span className="w-[89px]">Разд&nbsp; 1</span><span>4/6</span></StatusBox>
          <StatusBox className="w-[181px] pl-[2px]"><span className="w-[69px]">На&nbsp; 9,8см</span><span className="w-[48px]">Ст&nbsp; 2</span><span>Кол&nbsp; 1</span></StatusBox>
          <StatusBox className="w-[29px] justify-center text-[#a9a9a9]">ЗАП</StatusBox>
          <StatusBox className="w-[34px] justify-center text-[#a9a9a9]">ИСПР</StatusBox>
          <StatusBox className="w-[29px] justify-center text-[#a9a9a9]">ВДЛ</StatusBox>
          <StatusBox className="w-[29px] justify-center text-[#a9a9a9]">ЗАМ</StatusBox>
          <StatusBox className="w-[75px] overflow-hidden pl-px">русский (Ро</StatusBox>
          <StatusBox className="w-[46px]" />
          <StatusBox className="w-[36px]" />
          <StatusBox className="w-[26px]" />
          <StatusBox className="w-[31px]" />
          <svg viewBox="0 0 10 10" className="mt-auto mr-[2px] mb-[2px] ml-auto h-[10px] w-[10px]"><path d="M7 1h2v2H7zM4 4h2v2H4zM7 4h2v2H7zM1 7h2v2H1zM4 7h2v2H4zM7 7h2v2H7z" fill="#b8b8b4" /></svg>
        </footer>
      </div>
    </div>
  </div>
);

export default App;
